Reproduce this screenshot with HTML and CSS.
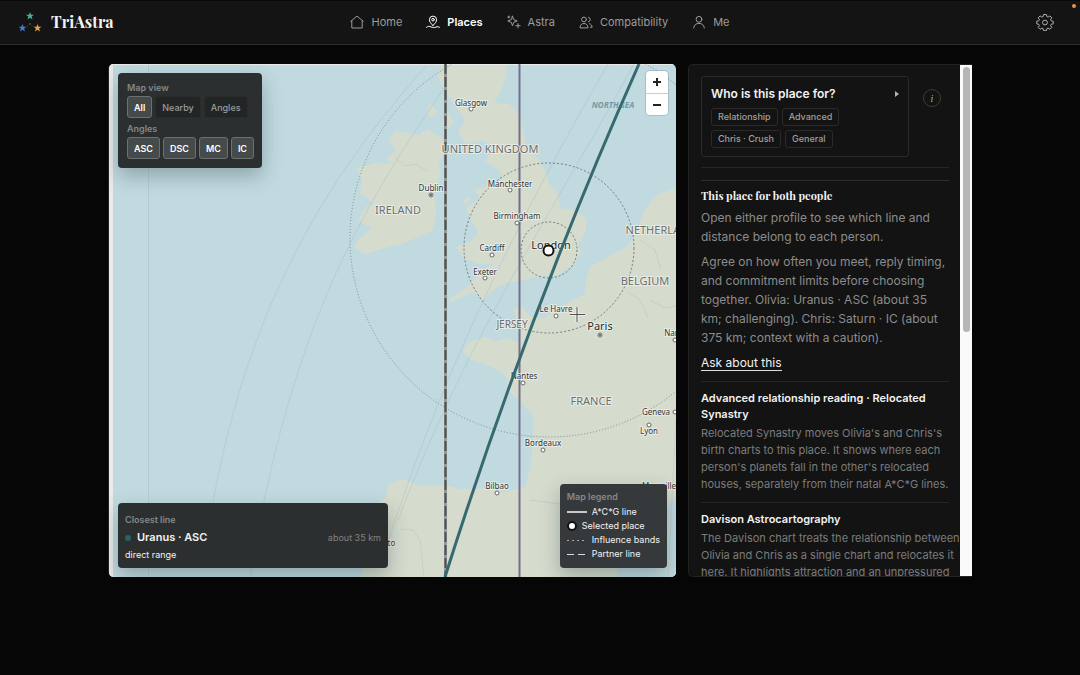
FILE: index.html
```html
<!DOCTYPE html>
<html lang="en">
<head>
<meta charset="utf-8">
<meta name="viewport" content="width=device-width, initial-scale=1">
<title>TriAstra – Places</title>
<link rel="stylesheet" href="styles.css">
</head>
<body>
<header class="topbar">
  <a class="brand" href="#">
    <svg class="brand-mark" viewBox="0 0 24 22" aria-hidden="true">
      <defs>
        <path id="star" d="M0-4 1-1.300 4-1.200 1.600.600 2.500 3.500 0 1.800-2.500 3.500-1.600.600-4-1.200-1-1.300Z"/>
      </defs>
      <use href="#star" x="12" y="5" fill="#45b596"/>
      <use href="#star" x="4.500" y="17" fill="#4a78d8"/>
      <use href="#star" x="19.500" y="17" fill="#e5a540"/>
      <circle cx="12" cy="13" r=".700" fill="#a58a4a"/>
      <circle cx="9.500" cy="15" r=".400" fill="#777"/>
      <circle cx="14" cy="15" r=".400" fill="#777"/>
    </svg>
    <span>TriAstra</span>
  </a>
  <nav class="nav" aria-label="Main">
    <a class="nav-link" href="#">
      <svg class="icon" viewBox="0 0 14 14" aria-hidden="true"><path d="M.800 6.300 7 1l6.200 5.300M1.800 5.600V13h10.400V5.600"/></svg>Home</a>
    <a class="nav-link active" href="#" aria-current="page">
      <svg class="icon" viewBox="0 0 14 14" aria-hidden="true"><path d="M7 10.500C4.500 8 3.400 6.500 3.400 4.700a3.600 3.600 0 0 1 7.200 0C10.600 6.500 9.500 8 7 10.500ZM.500 12.300c1.500-1.300 3-1.200 4.500-.400s3.500.900 5 .200 2.500-.500 3.500.200"/><circle cx="7" cy="4.700" r="1.300"/></svg>Places</a>
    <a class="nav-link" href="#">
      <svg class="icon" viewBox="0 0 14 14" aria-hidden="true"><path d="M5.500 1.200 6.700 4.600 10.200 6 6.700 7.300 5.500 10.800 4.200 7.300.800 6 4.200 4.600ZM11 8.600v4.200M8.900 10.700h4.200M.800 2h2M1.800 1v2"/></svg>Astra</a>
    <a class="nav-link" href="#">
      <svg class="icon" viewBox="0 0 14 14" aria-hidden="true"><circle cx="5" cy="4.500" r="2.400"/><path d="M1 12.500C1 9.800 2.800 8.500 5 8.500s4 1.300 4 4ZM9.500 2.200a2.400 2.400 0 0 1 0 4.600M10.500 8.700c1.600.500 2.600 1.800 2.600 3.600h-1.600"/></svg>Compatibility</a>
    <a class="nav-link" href="#">
      <svg class="icon" viewBox="0 0 14 14" aria-hidden="true"><circle cx="7" cy="4.300" r="2.900"/><path d="M1.700 13c.300-3 2.300-4.600 5.300-4.600s5 1.600 5.300 4.600"/></svg>Me</a>
  </nav>
  <button class="settings" type="button" aria-label="Settings">
    <svg viewBox="0 0 18 18" aria-hidden="true"><path d="M7.600 1.500h2.800l.400 2 1.300.600 1.800-1.200 1.900 1.900-1.200 1.800.600 1.200 2 .400v2.700l-2 .400-.600 1.300 1.200 1.800-1.900 1.900-1.800-1.200-1.300.600-.400 2H7.600l-.400-2-1.300-.600-1.800 1.200-1.900-1.900 1.200-1.800-.600-1.300-2-.400V8.200l2-.400.600-1.200-1.200-1.800 1.900-1.900 1.800 1.200 1.300-.600Z"/><circle cx="9" cy="9.500" r="2.400"/></svg>
  </button>
  <span class="status-dot"></span>
</header>

<main class="layout">
  <section class="map" aria-label="Map">
    <svg class="map-canvas" viewBox="109 64 567 513" preserveAspectRatio="xMidYMid slice">
      <rect class="sea" x="109" y="64" width="567" height="513"/>
      <g class="land">
        <path d="M395 131 418 135 428 130 442 138 445 152 438 164 441 175 434 190 436 213 433 230 418 237 402 244 385 248 365 254 354 248 358 240 372 228 358 220 366 207 373 203 360 193 362 181 357 168 375 163 392 164 386 158 396 151 389 141Z"/>
        <path d="M442 64H506L507 76 501 90 494 103 509 104 518 113 522 124 527 147 537 158 545 170 549 184 558 193 560 208 577 211 586 219 586 231 577 246 582 252 574 264 558 275 540 276 518 281 503 284 492 291 483 300 474 292 462 297 448 303 452 297 468 286 480 272 494 264 480 264 464 259 456 247 470 242 478 233 471 219 466 208 480 198 474 190 490 185 503 184 500 171 485 161 494 147 482 140 466 144 458 132 466 120 456 108 450 98 443 88 438 76Z"/>
        <path d="M676 188 658 194 645 209 640 224 635 236 626 247 608 257 590 267 586 280 585 294 568 302 556 310 544 318 530 316 522 307 513 309 517 322 522 333 520 343 508 338 497 341 484 337 468 343 463 352 472 360 490 366 506 376 510 392 519 400 533 416 533 440 530 470 525 487 504 492 485 488 460 489 444 485 420 486 402 479 388 485 386 497 371 510 365 545 362 577H676Z"/>
        <path d="M430 104 438 112 431 118 427 112ZM448 112 453 122 447 130 443 122ZM463 200 472 196 466 206Z"/>
      </g>
      <path class="sea" d="M676 497C664 505 661 530 650 538S617 548 617 577H676Z"/>
      <g class="terrain">
        <path d="M395 157 405 166 416 164 428 172M401 529 413 530 420 540 424 577M650 300 665 308 676 306M628 292 640 300 648 318M640 240 655 250 661 270"/>
        <path d="M530 500 560 504 585 509M668 577 676 420"/>
      </g>
      <path class="tile-edge" d="M109 64H676V65H113V577H109Z"/>
      <path class="faint" d="M148.500 64V577M426 66C330 174 250 300 213 502M445 87C360 210 290 330 250 577M608 64C530 200 450 350 387 545M634 64C560 200 470 330 398 520"/>
      <g class="bands">
        <circle cx="549" cy="250" r="28"/>
        <circle cx="549" cy="248" r="85"/>
        <circle class="wide" cx="549" cy="238" r="199"/>
      </g>
      <path class="line-base" d="M445.500 64V577"/>
      <path class="line-partner" d="M445.500 64V577"/>
      <path class="line-mc" d="M519.500 64V577"/>
      <g class="labels">
        <g class="dots">
          <circle cx="471" cy="109" r="2"/><circle cx="431" cy="195" r="2"/><circle cx="510" cy="190" r="2"/><circle cx="517" cy="223" r="2"/>
          <circle cx="492" cy="255" r="2"/><circle cx="485" cy="278" r="2"/><circle cx="556" cy="316" r="2"/><circle cx="600" cy="335" r="2"/>
          <circle cx="523" cy="383" r="2"/><circle cx="543" cy="450" r="2"/><circle cx="497" cy="493" r="2"/><circle cx="649" cy="425" r="2"/>
          <circle cx="675" cy="412" r="2"/><circle cx="675" cy="340" r="2"/>
        </g>
        <circle class="capital" cx="431" cy="195" r="1"/><circle class="capital" cx="600" cy="335" r="1"/>
        <g class="city">
          <text x="471" y="106">Glasgow</text><text x="431" y="191">Dublin</text><text x="510" y="187">Manchester</text>
          <text x="517" y="219">Birmingham</text><text x="492" y="251">Cardiff</text><text x="485" y="275">Exeter</text>
          <text x="556" y="312">Le Havre</text><text x="524" y="379">Nantes</text><text x="543" y="446">Bordeaux</text>
          <text x="497" y="489">Bilbao</text><text x="656" y="415">Geneva</text><text x="649" y="434">Lyon</text>
          <text x="676" y="336">Nancy</text><text x="659" y="489">Marseille</text><text x="385" y="546">Porto</text>
        </g>
        <g class="metro"><text x="551" y="249">London</text><text x="600" y="330">Paris</text></g>
        <g class="country">
          <text x="490" y="153">UNITED KINGDOM</text><text x="398" y="214">IRELAND</text><text x="664" y="234">NETHERLANDS</text>
          <text x="645" y="285">BELGIUM</text><text x="591" y="405">FRANCE</text>
        </g>
        <text class="island" x="512" y="328">JERSEY</text>
        <text class="water" x="613" y="108">NORTH SEA</text>
      </g>
      <path class="line-asc" d="M639 64C563 235 499 406 445 577"/>
      <circle class="place" cx="548.500" cy="250.500" r="5"/>
      <path class="cursor-edge" d="M577 307V322M570 314.500H585"/>
      <path class="cursor" d="M577 307V322M570 314.500H585"/>
    </svg>

    <div class="overlay filters">
      <p class="caption" id="view-label">Map view</p>
      <div class="chips" role="group" aria-labelledby="view-label">
        <button class="chip on" type="button">All</button>
        <button class="chip" type="button">Nearby</button>
        <button class="chip" type="button">Angles</button>
      </div>
      <p class="caption" id="angle-label">Angles</p>
      <div class="chips tight" role="group" aria-labelledby="angle-label">
        <button class="chip on" type="button">ASC</button>
        <button class="chip on" type="button">DSC</button>
        <button class="chip on" type="button">MC</button>
        <button class="chip on" type="button">IC</button>
      </div>
    </div>

    <div class="zoom">
      <button type="button" aria-label="Zoom in"><svg viewBox="0 0 10 10" aria-hidden="true"><path d="M5 1v8M1 5h8"/></svg></button>
      <button type="button" aria-label="Zoom out"><svg viewBox="0 0 10 10" aria-hidden="true"><path d="M1 5h8"/></svg></button>
    </div>

    <div class="overlay closest">
      <p class="caption">Closest line</p>
      <p class="closest-row"><span class="planet-dot"></span><strong>Uranus · ASC</strong><span class="distance">about 35 km</span></p>
      <p class="range">direct range</p>
    </div>

    <div class="overlay legend">
      <p class="caption">Map legend</p>
      <ul>
        <li><span class="key solid"></span>A*C*G line</li>
        <li><span class="key-dot"></span>Selected place</li>
        <li><span class="key dotted"></span>Influence bands</li>
        <li><span class="key dashed"></span>Partner line</li>
      </ul>
    </div>
  </section>

  <aside class="panel">
    <div class="panel-scroll">
      <div class="who-row">
        <div class="who">
          <button class="who-toggle" type="button" aria-expanded="false">Who is this place for?
            <svg viewBox="0 0 4 6" aria-hidden="true"><path d="M0 0 4 3 0 6Z"/></svg></button>
          <ul class="tags">
            <li>Relationship</li><li>Advanced</li><li>Chris · Crush</li><li>General</li>
          </ul>
        </div>
        <button class="info" type="button" aria-label="Information">i</button>
      </div>
      <section class="both">
        <h2>This place for both people</h2>
        <p>Open either profile to see which line and distance belong to each person.</p>
        <p>Agree on how often you meet, reply timing, and commitment limits before choosing together. Olivia: Uranus · ASC (about 35 km; challenging). Chris: Saturn · IC (about 375 km; context with a caution).</p>
        <a class="ask" href="#">Ask about this</a>
      </section>
      <section class="reading">
        <h3>Advanced relationship reading · Relocated Synastry</h3>
        <p>Relocated Synastry moves Olivia's and Chris's birth charts to this place. It shows where each person's planets fall in the other's relocated houses, separately from their natal A*C*G lines.</p>
      </section>
      <section class="reading">
        <h3>Davison Astrocartography</h3>
        <p>The Davison chart treats the relationship between Olivia and Chris as a single chart and relocates it here. It highlights attraction and an unpressured</p>
      </section>
    </div>
    <div class="scrollbar" aria-hidden="true"><span class="thumb"></span></div>
  </aside>
</main>
</body>
</html>
```

FILE: styles.css
```css
* { box-sizing: border-box; }
body {
  margin: 0;
  min-height: 100vh;
  background: #060606;
  color: #f2f2f2;
  font-family: Inter, "Liberation Sans", sans-serif;
  font-size: 12px;
}
p, h2, h3, ul { margin: 0; padding: 0; }
ul { list-style: none; }
button { font: inherit; color: inherit; cursor: pointer; }
a { color: inherit; text-decoration: none; }

.topbar {
  position: relative;
  display: grid;
  grid-template-columns: 1fr auto 1fr;
  align-items: center;
  height: 45px;
  padding: 0 26px 2px;
  background: #141414;
  border-top: 1px solid #090909;
  border-bottom: 1px solid #2d2d2d;
}
.brand {
  display: flex;
  align-items: center;
  gap: 9px;
  margin-left: -8px;
  font: bold 16px "Playfair Display", "Liberation Serif", serif;
}
.brand-mark { width: 24px; height: 22px; }
.nav { display: flex; gap: 24px; }
.nav-link {
  display: flex;
  align-items: center;
  gap: 7px;
  font-size: 11px;
  color: #9c9c9c;
}
.nav-link.active { color: #fff; font-weight: 600; }
.icon { width: 14px; height: 14px; fill: none; stroke: currentColor; stroke-width: 1; stroke-linejoin: round; stroke-linecap: round; }
.settings { justify-self: end; display: flex; padding: 0; border: 0; background: none; color: #b0b0b0; }
.settings svg { width: 18px; height: 18px; fill: none; stroke: currentColor; stroke-width: 1; stroke-linejoin: round; }
.status-dot { position: absolute; top: 3px; right: 4px; width: 4px; height: 4px; border-radius: 50%; background: #e8924e; }

.layout {
  display: grid;
  grid-template-columns: 2fr 1fr;
  gap: 12px;
  width: 80%;
  margin: 19px auto;
}
.map, .panel { height: 76vh; min-width: 0; }
.map { position: relative; overflow: hidden; border-radius: 5px; border-left: 1px solid #222; }
.map-canvas { display: block; width: 100%; height: 100%; }

.sea { fill: #c1dae0; }
.land { fill: #d5dcce; }
.terrain { fill: none; stroke: #c8cfc4; stroke-width: 1; }
.tile-edge { fill: #e9ebe8; }
.faint { fill: none; stroke: #8fa8ac; stroke-opacity: .25; stroke-width: 1; }
.bands { fill: none; stroke: #6c7c80; stroke-width: 1; stroke-dasharray: 2 2; }
.bands .wide { stroke: #7b8b90; stroke-dasharray: 1 2; }
.line-base { stroke: #939a98; stroke-width: 3; }
.line-partner { stroke: #4c5150; stroke-width: 2; stroke-dasharray: 10 3; }
.line-mc { stroke: #756f88; stroke-width: 2; }
.line-asc { fill: none; stroke: #376a70; stroke-width: 3; }
.labels text { font-family: "Noto Sans", sans-serif; text-anchor: middle; paint-order: stroke; stroke: #eef1ea; stroke-opacity: .8; stroke-width: 2; stroke-linejoin: round; }
.city { font-size: 8px; fill: #333; }
.metro { font-size: 11px; fill: #2b2b2b; }
.country { font-size: 11px; fill: #6b6e70; }
.island { font-size: 10px; fill: #6b6e70; }
.labels .water { font-size: 8px; font-style: italic; font-weight: bold; fill: #7399a4; stroke: none; }
.dots { fill: #fff; stroke: #666; stroke-width: 1; }
.capital { fill: #444; }
.place { fill: #fff; stroke: #111; stroke-width: 2; }
.cursor-edge { stroke: #eee; stroke-width: 3; }
.cursor { stroke: #4d4d4d; stroke-width: 1; }

.overlay {
  position: absolute;
  background: #2c2f2f;
  border-radius: 4px;
  box-shadow: 0 8px 20px rgba(20, 40, 45, .3);
}
.caption { font-size: 9px; font-weight: 600; line-height: 12px; color: #858888; }
.filters { top: 9px; left: 9px; padding: 9px 8px 9px 9px; }
.chips { display: flex; gap: 3px; margin: 2px 0 5px; }
.chips.tight { margin-bottom: 0; }
.chip {
  height: 22px;
  padding: 0 6px;
  border: 1px solid #2a2c2c;
  border-radius: 3px;
  background: #222525;
  color: #9a9c9c;
  font-size: 9px;
  font-weight: 500;
}
.chip.on { background: #454a4b; border-color: #6c7071; color: #fff; font-weight: 600; }

.zoom {
  position: absolute;
  top: 7px;
  right: 8px;
  width: 22px;
  border-radius: 4px;
  background: #fff;
  box-shadow: 0 0 0 1px rgba(0, 0, 0, .12);
}
.zoom button { display: grid; place-items: center; width: 100%; height: 22px; padding: 0; border: 0; background: none; }
.zoom button + button { border-top: 1px solid #ccc; }
.zoom svg { width: 10px; height: 10px; stroke: #222; stroke-width: 2; }

.closest { left: 9px; bottom: 9px; width: 270px; padding: 11px 7px 6px; }
.closest-row { display: flex; align-items: center; gap: 6px; margin: 2px 0 0; line-height: 19px; }
.closest-row strong { font-size: 11px; font-weight: 600; }
.planet-dot { flex: none; width: 6px; height: 6px; border-radius: 50%; background: #2b6269; }
.distance { margin-left: auto; font-size: 9px; color: #808383; }
.range { font-size: 9px; line-height: 15px; }

.legend { right: 9px; bottom: 9px; padding: 7px; background: #36393b; font-size: 9px; line-height: 14px; }
.legend li { display: flex; align-items: center; gap: 5px; }
.legend ul { margin-top: 2px; }
.key { width: 20px; height: 2px; }
.key.solid { background: #c8c8c8; }
.key.dotted { height: 1px; background: repeating-linear-gradient(90deg, #aaa 0 2px, transparent 2px 5px); }
.key.dashed { height: 1px; background: repeating-linear-gradient(90deg, #ddd 0 7px, transparent 7px 11px); }
.key-dot { width: 10px; height: 10px; border: 2px solid #111; border-radius: 50%; background: #fff; }

.panel {
  display: flex;
  overflow: hidden;
  background: #131313;
  border: 1px solid #222;
  border-right: 0;
  border-radius: 5px 0 0 5px;
}
.panel-scroll { flex: 1; min-width: 0; padding: 11px 11px 0 12px; overflow: hidden; }
.scrollbar { width: 12px; padding: 2px 2px 0 3px; background: #fafafa; }
.thumb { display: block; height: 52%; border-radius: 4px; background: #b6b6b6; }

.who-row { display: flex; gap: 14px; padding-bottom: 10px; border-bottom: 1px solid #262626; }
.who { flex: 1; padding: 8px 9px; border: 1px solid #2a2a2a; border-radius: 3px; }
.who-toggle {
  display: flex;
  align-items: center;
  justify-content: space-between;
  width: 100%;
  height: 17px;
  padding: 0;
  border: 0;
  background: none;
  font-size: 12px;
  font-weight: 600;
  text-align: left;
}
.who-toggle svg { width: 4px; height: 6px; fill: #b5b5b5; }
.tags { display: flex; flex-wrap: wrap; gap: 4px; margin-top: 6px; }
.tags li {
  padding: 0 6px;
  border: 1px solid #2a2a2a;
  border-radius: 3px;
  font-size: 9px;
  font-weight: 500;
  line-height: 16px;
  color: #a0a0a0;
}
.info {
  width: 18px;
  height: 18px;
  margin: 13px 8px 0 0;
  padding: 0;
  border: 1px solid #3c3c3c;
  border-radius: 50%;
  background: none;
  font: italic 10px "Liberation Serif", serif;
  color: #b0b0b0;
}
.both { margin-top: 12px; padding: 7px 0 10px; border-top: 1px solid #2c2c2c; }
.both h2 { font: bold 11px/16px "Playfair Display", "Liberation Serif", serif; }
.both p { margin: 4px 0 6px; font-size: 12px; line-height: 19px; color: #8c8c8c; }
.ask { display: inline-block; margin-top: 2px; font-size: 12px; line-height: 15px; border-bottom: 1px solid #ddd; }
.reading { padding: 8px 0 9px; border-top: 1px solid #262626; }
.reading h3 { font-size: 11px; font-weight: 600; line-height: 16px; }
.reading p { margin: 3px -11px 0 0; font-size: 11px; line-height: 17px; color: #7c7c7c; }
```
